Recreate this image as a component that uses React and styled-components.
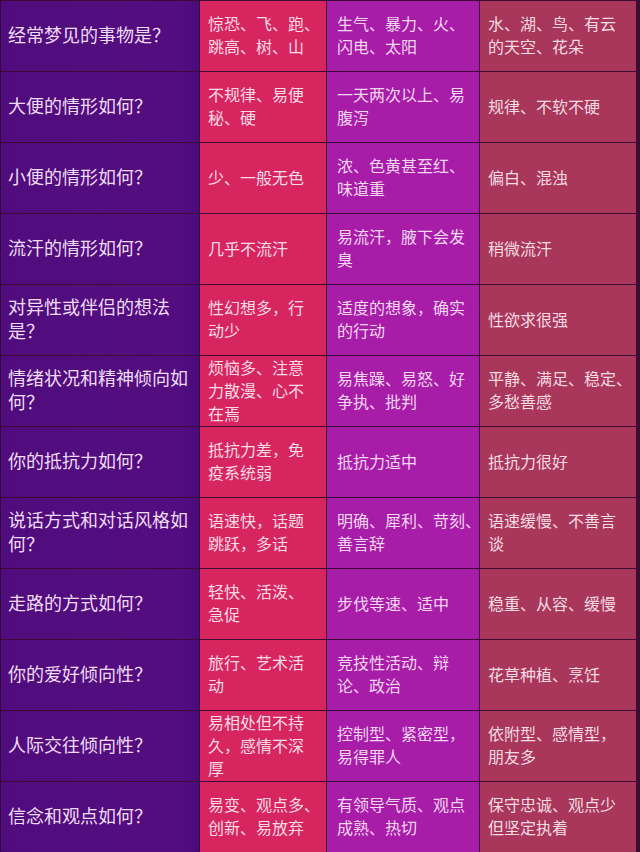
import React from "react";
import styled, { createGlobalStyle } from "styled-components";

const GlobalStyle = createGlobalStyle`
  html, body {
    margin: 0;
    padding: 0;
    background: #3b0b35;
  }
  * {
    box-sizing: border-box;
  }
`;

const Table = styled.div`
  width: 640px;
  height: 852px;
  display: grid;
  grid-template-columns: 199px 127px 153px 157px;
  grid-auto-rows: 71px;
  font-family: "Liberation Serif", "Noto Sans CJK SC", serif;
  border-left: 1px solid #2e0a3c;
  border-right: 3px solid #3b0b35;
  overflow: hidden;
`;

const columns = [
  { bg: "linear-gradient(to right, #500c7c 0%, #530d80 90%, #4a0a7a 100%)", pad: 7, size: 18, lh: 24, color: "#efdcf3" },
  { bg: "#d7255f", pad: 8, size: 16, lh: 23, color: "#f6dbe6" },
  { bg: "#a81da8", pad: 10, size: 16, lh: 23, color: "#f1d6ef" },
  { bg: "#a9365b", pad: 8, size: 16, lh: 23, color: "#f3dbe2" },
];

const Cell = styled.div`
  display: flex;
  flex-direction: column;
  justify-content: center;
  padding-left: ${(p) => p.$pad}px;
  background: ${(p) => p.$bg};
  color: ${(p) => p.$color};
  font-size: ${(p) => p.$size}px;
  line-height: ${(p) => p.$lh}px;
  border-top: 1px solid #3b0b35;
  border-right: 1px solid #3b0b35;
  white-space: nowrap;
`;

const Line = styled.span`
  display: block;
`;

const rows = [
  [["经常梦见的事物是？"], ["惊恐、飞、跑、", "跳高、树、山"], ["生气、暴力、火、", "闪电、太阳"], ["水、湖、鸟、有云", "的天空、花朵"]],
  [["大便的情形如何？"], ["不规律、易便", "秘、硬"], ["一天两次以上、易", "腹泻"], ["规律、不软不硬"]],
  [["小便的情形如何？"], ["少、一般无色"], ["浓、色黄甚至红、", "味道重"], ["偏白、混浊"]],
  [["流汗的情形如何？"], ["几乎不流汗"], ["易流汗，腋下会发", "臭"], ["稍微流汗"]],
  [["对异性或伴侣的想法", "是？"], ["性幻想多，行", "动少"], ["适度的想象，确实", "的行动"], ["性欲求很强"]],
  [["情绪状况和精神倾向如", "何？"], ["烦恼多、注意", "力散漫、心不", "在焉"], ["易焦躁、易怒、好", "争执、批判"], ["平静、满足、稳定、", "多愁善感"]],
  [["你的抵抗力如何？"], ["抵抗力差，免", "疫系统弱"], ["抵抗力适中"], ["抵抗力很好"]],
  [["说话方式和对话风格如", "何？"], ["语速快，话题", "跳跃，多话"], ["明确、犀利、苛刻、", "善言辞"], ["语速缓慢、不善言", "谈"]],
  [["走路的方式如何？"], ["轻快、活泼、", "急促"], ["步伐等速、适中"], ["稳重、从容、缓慢"]],
  [["你的爱好倾向性？"], ["旅行、艺术活", "动"], ["竞技性活动、辩", "论、政治"], ["花草种植、烹饪"]],
  [["人际交往倾向性？"], ["易相处但不持", "久，感情不深", "厚"], ["控制型、紧密型，", "易得罪人"], ["依附型、感情型，", "朋友多"]],
  [["信念和观点如何？"], ["易变、观点多、", "创新、易放弃"], ["有领导气质、观点", "成熟、热切"], ["保守忠诚、观点少", "但坚定执着"]],
];

export default function App() {
  return (
    <>
      <GlobalStyle />
      <Table>
        {rows.map((row, r) =>
          row.map((lines, c) => {
            const col = columns[c];
            return (
              <Cell
                key={`${r}-${c}`}
                $bg={col.bg}
                $pad={col.pad}
                $size={col.size}
                $lh={col.lh}
                $color={col.color}
              >
                {lines.map((t, i) => (
                  <Line key={i}>{t}</Line>
                ))}
              </Cell>
            );
          })
        )}
      </Table>
    </>
  );
}
